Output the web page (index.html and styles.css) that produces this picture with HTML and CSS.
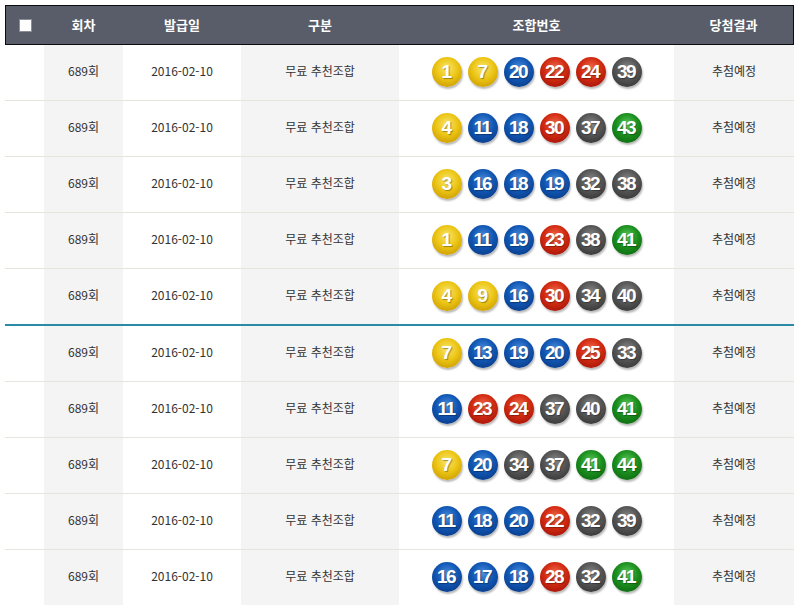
FILE: index.html
```html
<!DOCTYPE html>
<html lang="ko">
<head>
<meta charset="utf-8">
<link rel="stylesheet" href="styles.css">
</head>
<body>
<div class="list">
  <div class="head">
    <div class="hc"><span class="chk"></span></div>
    <div class="hc">회차</div>
    <div class="hc">발급일</div>
    <div class="hc">구분</div>
    <div class="hc">조합번호</div>
    <div class="hc">당첨결과</div>
  </div>

  <div class="row">
    <div class="c"></div><div class="c g">689회</div><div class="c">2016-02-10</div><div class="c g">무료 추천조합</div>
    <div class="c balls"><span class="ball y">1</span><span class="ball y">7</span><span class="ball b">20</span><span class="ball r">22</span><span class="ball r">24</span><span class="ball k">39</span></div>
    <div class="c g">추첨예정</div>
  </div>
  <div class="row">
    <div class="c"></div><div class="c g">689회</div><div class="c">2016-02-10</div><div class="c g">무료 추천조합</div>
    <div class="c balls"><span class="ball y">4</span><span class="ball b">11</span><span class="ball b">18</span><span class="ball r">30</span><span class="ball k">37</span><span class="ball n">43</span></div>
    <div class="c g">추첨예정</div>
  </div>
  <div class="row">
    <div class="c"></div><div class="c g">689회</div><div class="c">2016-02-10</div><div class="c g">무료 추천조합</div>
    <div class="c balls"><span class="ball y">3</span><span class="ball b">16</span><span class="ball b">18</span><span class="ball b">19</span><span class="ball k">32</span><span class="ball k">38</span></div>
    <div class="c g">추첨예정</div>
  </div>
  <div class="row">
    <div class="c"></div><div class="c g">689회</div><div class="c">2016-02-10</div><div class="c g">무료 추천조합</div>
    <div class="c balls"><span class="ball y">1</span><span class="ball b">11</span><span class="ball b">19</span><span class="ball r">23</span><span class="ball k">38</span><span class="ball n">41</span></div>
    <div class="c g">추첨예정</div>
  </div>
  <div class="row sep">
    <div class="c"></div><div class="c g">689회</div><div class="c">2016-02-10</div><div class="c g">무료 추천조합</div>
    <div class="c balls"><span class="ball y">4</span><span class="ball y">9</span><span class="ball b">16</span><span class="ball r">30</span><span class="ball k">34</span><span class="ball k">40</span></div>
    <div class="c g">추첨예정</div>
  </div>
  <div class="row">
    <div class="c"></div><div class="c g">689회</div><div class="c">2016-02-10</div><div class="c g">무료 추천조합</div>
    <div class="c balls"><span class="ball y">7</span><span class="ball b">13</span><span class="ball b">19</span><span class="ball b">20</span><span class="ball r">25</span><span class="ball k">33</span></div>
    <div class="c g">추첨예정</div>
  </div>
  <div class="row">
    <div class="c"></div><div class="c g">689회</div><div class="c">2016-02-10</div><div class="c g">무료 추천조합</div>
    <div class="c balls"><span class="ball b">11</span><span class="ball r">23</span><span class="ball r">24</span><span class="ball k">37</span><span class="ball k">40</span><span class="ball n">41</span></div>
    <div class="c g">추첨예정</div>
  </div>
  <div class="row">
    <div class="c"></div><div class="c g">689회</div><div class="c">2016-02-10</div><div class="c g">무료 추천조합</div>
    <div class="c balls"><span class="ball y">7</span><span class="ball b">20</span><span class="ball k">34</span><span class="ball k">37</span><span class="ball n">41</span><span class="ball n">44</span></div>
    <div class="c g">추첨예정</div>
  </div>
  <div class="row">
    <div class="c"></div><div class="c g">689회</div><div class="c">2016-02-10</div><div class="c g">무료 추천조합</div>
    <div class="c balls"><span class="ball b">11</span><span class="ball b">18</span><span class="ball b">20</span><span class="ball r">22</span><span class="ball k">32</span><span class="ball k">39</span></div>
    <div class="c g">추첨예정</div>
  </div>
  <div class="row">
    <div class="c"></div><div class="c g">689회</div><div class="c">2016-02-10</div><div class="c g">무료 추천조합</div>
    <div class="c balls"><span class="ball b">16</span><span class="ball b">17</span><span class="ball b">18</span><span class="ball r">28</span><span class="ball k">32</span><span class="ball n">41</span></div>
    <div class="c g">추첨예정</div>
  </div>
</div>
</body>
</html>
```

FILE: styles.css
```css
html, body {
  margin: 0;
  padding: 0;
  background: #fff;
}
body {
  padding: 5px 0 0 5px;
  font-family: "Noto Sans CJK KR", "Liberation Sans", sans-serif;
  font-size: 12px;
  color: #333;
}
.list {
  width: 789px;
}
.head {
  display: grid;
  grid-template-columns: 38px 79px 118px 158px 275px 119px;
  height: 38px;
  border: 1px solid #0c0c0c;
  background: #595d69;
}
.hc {
  display: flex;
  align-items: center;
  justify-content: center;
  color: #fff;
  font-weight: bold;
  font-size: 13px;
  padding-bottom: 2px;
}
.chk {
  width: 11px;
  height: 11px;
  background: #fff;
  border: 1px solid #8a8d95;
  margin-left: 1px;
  margin-top: 2px;
}
.row {
  display: grid;
  grid-template-columns: 39px 79px 118px 158px 275px 120px;
  height: 55px;
  border-bottom: 1px solid #e7e3dd;
}
.row.sep {
  border-bottom: 2px solid #2b8ba7;
}
.c {
  display: flex;
  align-items: center;
  justify-content: center;
  padding-bottom: 4px;
  line-height: 1;
}
.g {
  background: #f4f4f4;
}
.balls {
  gap: 6px;
  padding-bottom: 2px;
}
.ball {
  width: 30px;
  height: 30px;
  border-radius: 50%;
  display: flex;
  align-items: center;
  justify-content: center;
  color: #fff;
  font-family: "Liberation Sans", "DejaVu Sans", sans-serif;
  font-weight: bold;
  font-size: 19px;
  letter-spacing: -1.5px;
  text-indent: -1px;
  text-shadow: 1px 1px 1px rgba(0,0,0,0.35);
  box-shadow: 1px 2px 2px rgba(0,0,0,0.28);
}
.ball.y {
  background: radial-gradient(circle at 50% 38%, #f9e56e 0%, #ecc514 45%, #cfa005 80%, #a87f04 100%);
}
.ball.b {
  background: radial-gradient(circle at 50% 38%, #4c8fdd 0%, #1157b4 45%, #0a3e8d 80%, #062c6a 100%);
}
.ball.r {
  background: radial-gradient(circle at 50% 38%, #f26c4c 0%, #d22b12 45%, #a9170a 80%, #7f0c04 100%);
}
.ball.k {
  background: radial-gradient(circle at 50% 38%, #8a8a8a 0%, #555 45%, #3a3a3a 80%, #262626 100%);
}
.ball.n {
  background: radial-gradient(circle at 50% 38%, #5ccb58 0%, #1c8f1f 45%, #0f6e12 80%, #08500a 100%);
}
```
